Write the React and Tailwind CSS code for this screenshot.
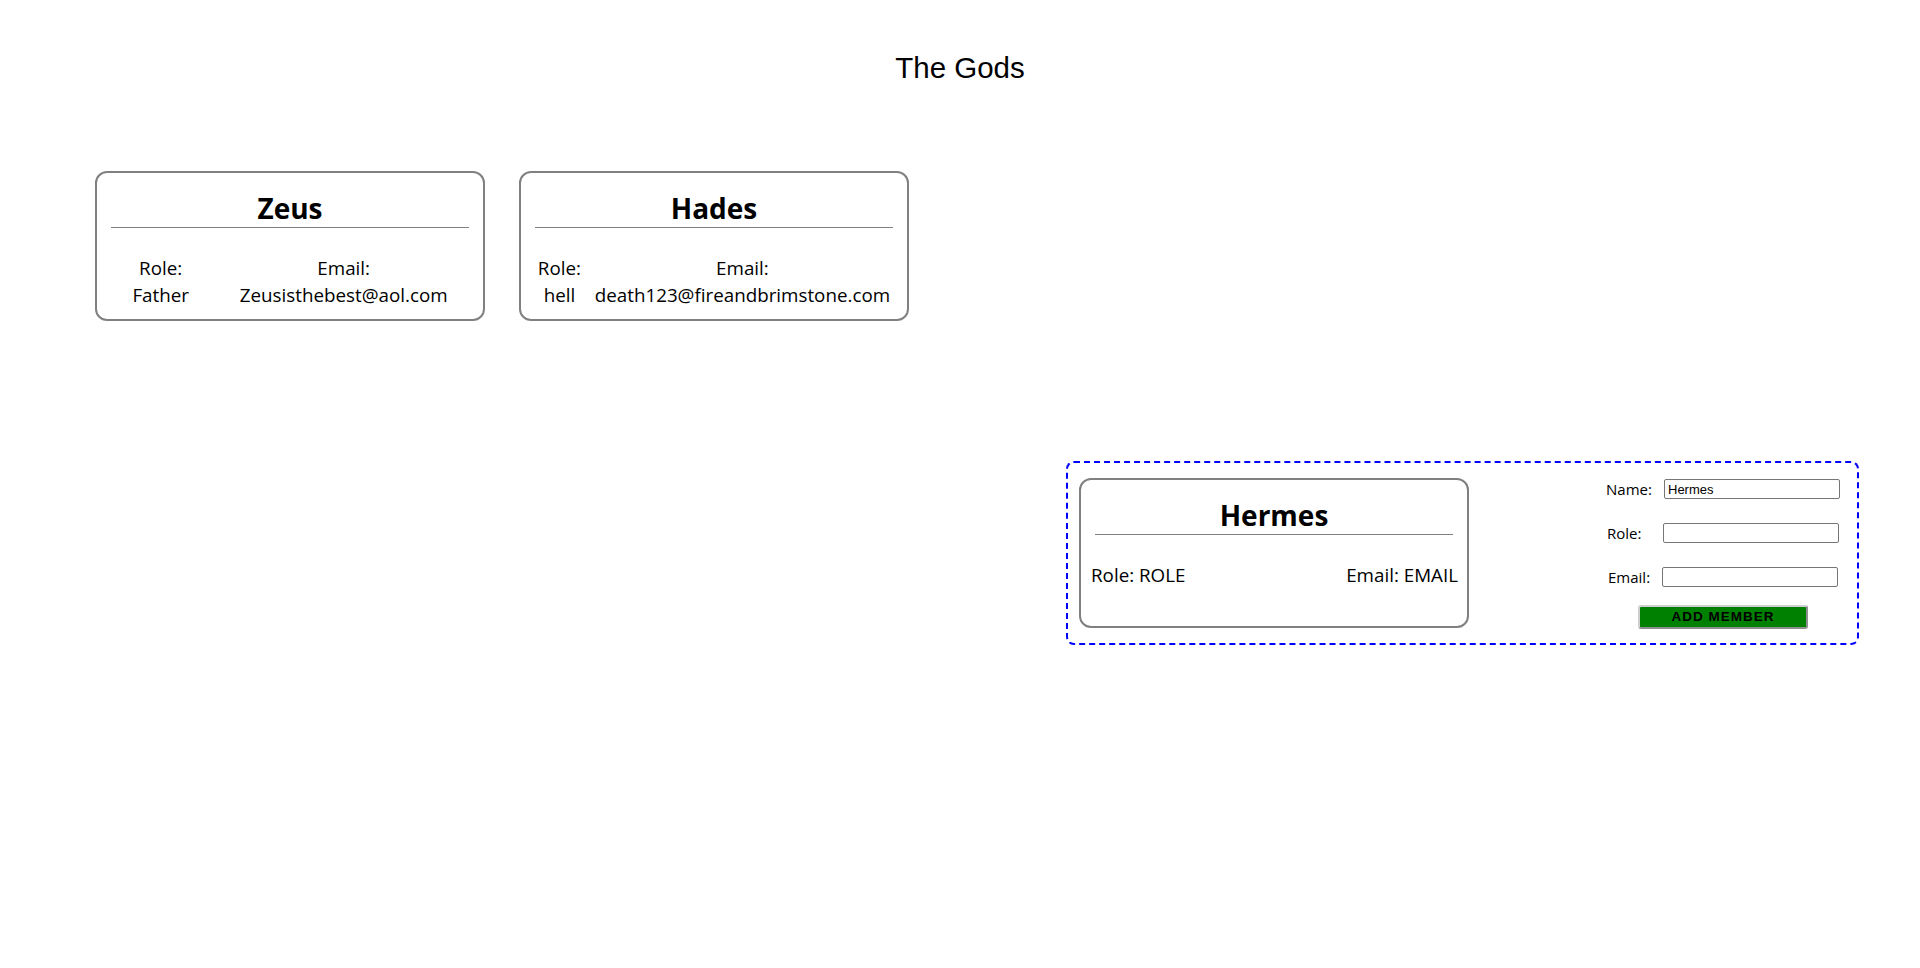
import React, { useState } from "react";

const gods = [
  { name: "Zeus", role: "Father", email: "Zeusisthebest@aol.com" },
  { name: "Hades", role: "hell", email: "death123@fireandbrimstone.com" },
];

function CardTitle({ name }) {
  return (
    <>
      <h2 className="pt-[18px] text-center text-[28px] leading-[34px] font-bold text-black">
        {name}
      </h2>
      <div className="mx-[14px] mt-[2px] border-t border-[#808080]" />
    </>
  );
}

function GodCard({ god }) {
  return (
    <div className="w-[390px] h-[150px] border-2 border-[#808080] rounded-[12px] bg-white">
      <CardTitle name={god.name} />
      <div className="mt-[27px] px-[10px] flex justify-around text-center text-[18.8px] leading-[27px] text-black">
        <div>
          <div>Role:</div>
          <div>{god.role}</div>
        </div>
        <div>
          <div>Email:</div>
          <div>{god.email}</div>
        </div>
      </div>
    </div>
  );
}

function PreviewCard({ name }) {
  return (
    <div className="w-[390px] h-[150px] border-2 border-[#808080] rounded-[12px] bg-white">
      <CardTitle name={name || "NAME"} />
      <div className="mt-[27px] pl-[10px] pr-[9px] flex justify-between text-[18.8px] leading-[27px] text-black">
        <span>Role: ROLE</span>
        <span>Email: EMAIL</span>
      </div>
    </div>
  );
}

function App() {
  const [form, setForm] = useState({ name: "Hermes", role: "", email: "" });

  return (
    <div className="min-h-screen bg-white font-['Open_Sans',sans-serif]">
      <h1 className="pt-[53px] text-center text-[29.5px] leading-[30px] font-normal text-black font-['Liberation_Sans',Arial,sans-serif]">
        The Gods
      </h1>

      {/* existing members */}
      <div className="mt-[88px] pl-[95px] flex gap-[34px]">
        {gods.map((g) => (
          <GodCard key={g.name} god={g} />
        ))}
      </div>

      {/* add member */}
      <div className="mt-[140px] pr-[61px] flex justify-end">
        <div className="w-[793px] h-[184px] border-2 border-dashed border-[#0000ff] rounded-[8px] pl-[11px] pt-[15px] flex justify-between items-start">
          <PreviewCard name={form.name} />

          <div className="w-[268px] pt-[1px] flex flex-col items-center">
            <div className="flex flex-col gap-[24px]">
              <div className="flex items-center justify-center h-[20px]">
                <label className="w-[58px] text-[15px] leading-[20px] text-black">Name:</label>
                <input
                  type="text"
                  value={form.name}
                  onChange={(e) => setForm({ ...form, name: e.target.value })}
                  className="w-[176px] h-[20px] border border-[#767676] rounded-[2px] px-[3px] text-[13px] text-black font-['Liberation_Sans',Arial,sans-serif] outline-none"
                />
              </div>
              <div className="flex items-center justify-center h-[20px]">
                <label className="w-[56px] text-[15px] leading-[20px] text-black">Role:</label>
                <input
                  type="text"
                  value={form.role}
                  onChange={(e) => setForm({ ...form, role: e.target.value })}
                  className="w-[176px] h-[20px] border border-[#767676] rounded-[2px] px-[3px] text-[13px] text-black font-['Liberation_Sans',Arial,sans-serif] outline-none"
                />
              </div>
              <div className="flex items-center justify-center h-[20px]">
                <label className="w-[54px] text-[15px] leading-[20px] text-black">Email:</label>
                <input
                  type="text"
                  value={form.email}
                  onChange={(e) => setForm({ ...form, email: e.target.value })}
                  className="w-[176px] h-[20px] border border-[#767676] rounded-[2px] px-[3px] text-[13px] text-black font-['Liberation_Sans',Arial,sans-serif] outline-none"
                />
              </div>
            </div>
            <button className="mt-[18px] w-[170px] h-[24px] bg-[#008000] border-2 border-[#8f8f8f] border-t-[#cfcfcf] border-l-[#cfcfcf] rounded-[3px] text-[13.5px] leading-[18px] font-bold tracking-[1px] text-black font-['Liberation_Sans',Arial,sans-serif]">
              ADD MEMBER
            </button>
          </div>
        </div>
      </div>
    </div>
  );
}

export default App;
